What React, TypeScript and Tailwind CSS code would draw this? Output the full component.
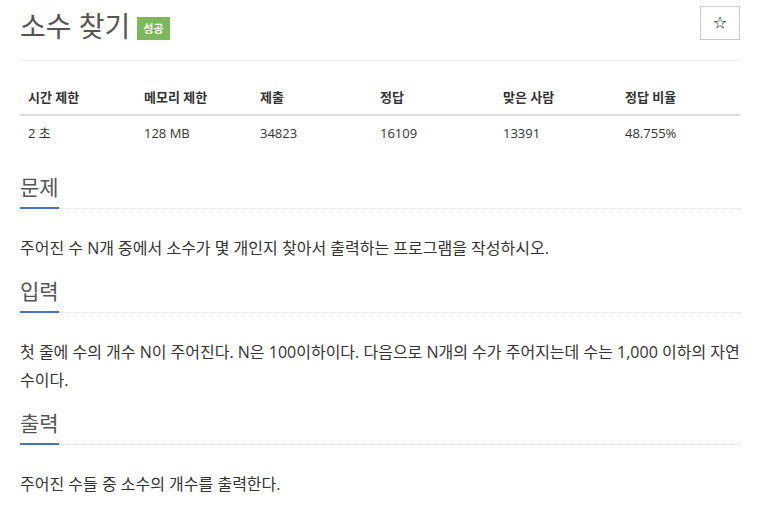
import React from 'react';

// Problem stats shown in the table under the title
const stats = [
  { label: '시간 제한', value: '2 초', width: 'w-[116px]' },
  { label: '메모리 제한', value: '128 MB', width: 'w-[116px]' },
  { label: '제출', value: '34823', width: 'w-[120px]' },
  { label: '정답', value: '16109', width: 'w-[123px]' },
  { label: '맞은 사람', value: '13391', width: 'w-[122px]' },
  { label: '정답 비율', value: '48.755%', width: '' },
];

const font = { fontFamily: '"Open Sans", "Noto Sans CJK KR", sans-serif' };

interface SectionProps {
  title: string;
  children: React.ReactNode;
}

const Section: React.FC<SectionProps> = ({ title, children }) => (
  <section>
    <div className="border-b border-dotted border-[#ddd]">
      <h2 className="inline-block border-b-2 border-[#4a70c2] -mb-px text-[21px] leading-[30px] pb-[5px] text-[#555]">
        {title}
      </h2>
    </div>
    <p className="text-[16px] leading-[28px] text-[#333] pt-[25px] pb-[14px] break-keep">{children}</p>
  </section>
);

export default function App() {
  return (
    <div className="w-[759px] h-[516px] bg-white pl-5 pr-[19px] pt-[6px] overflow-hidden" style={font}>
      {/* Title row */}
      <div className="flex items-start justify-between border-b border-[#eee] h-[55px]">
        <div className="flex items-center pt-[3px]">
          <h1 className="text-[28px] leading-[34px] text-[#555]">소수 찾기</h1>
          <span className="ml-[7px] mt-[5px] bg-[#7cb95c] text-white text-[11px] font-bold leading-[23px] px-[6px]">
            성공
          </span>
        </div>
        <button className="w-10 h-[34px] border border-[#ccc] bg-white text-[13px] text-[#222] flex items-center justify-center">
          ☆
        </button>
      </div>

      {/* Stats table */}
      <table className="w-full mt-[20px] text-[13px] text-[#333] border-collapse">
        <thead>
          <tr className="border-b-2 border-[#ddd]">
            {stats.map((s) => (
              <th key={s.label} className={`${s.width} text-left font-bold px-2 h-[34px]`}>
                {s.label}
              </th>
            ))}
          </tr>
        </thead>
        <tbody>
          <tr>
            {stats.map((s) => (
              <td key={s.label} className="px-2 h-[36px]">
                {s.value}
              </td>
            ))}
          </tr>
        </tbody>
      </table>

      <div className="mt-[21px]">
        <Section title="문제">주어진 수 N개 중에서 소수가 몇 개인지 찾아서 출력하는 프로그램을 작성하시오.</Section>
        <Section title="입력">
          첫 줄에 수의 개수 N이 주어진다. N은 100이하이다. 다음으로 N개의 수가 주어지는데 수는 1,000 이하의 자연 수이다.
        </Section>
        <Section title="출력">주어진 수들 중 소수의 개수를 출력한다.</Section>
      </div>
    </div>
  );
}
